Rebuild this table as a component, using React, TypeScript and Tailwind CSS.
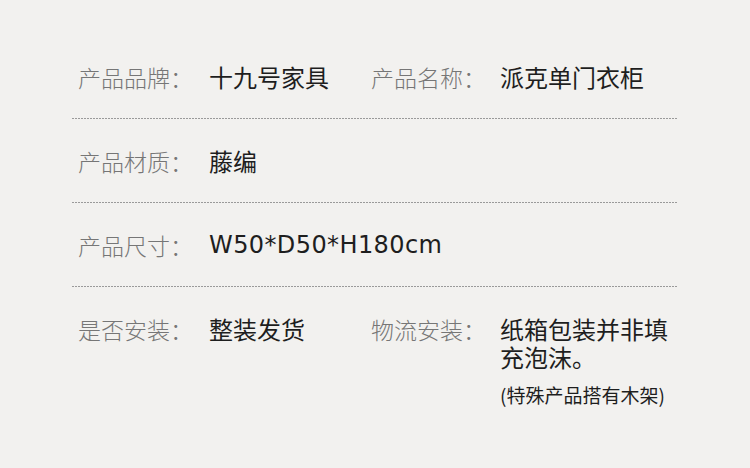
import React from "react";

const font = { fontFamily: '"Noto Sans CJK SC", "Noto Sans", sans-serif' };

function Line() {
  return (
    <div className="h-px w-full bg-[linear-gradient(to_right,#9a9a9a_2px,transparent_2px)] bg-[length:3px_1px] bg-repeat-x" />
  );
}

const label = "text-[23px] leading-[28px] font-light text-[#767676]";
const value = "text-[24px] leading-[28px] text-[#1e1e1e]";

export default function App() {
  return (
    <div className="w-[750px] h-[468px] bg-[#f2f1ef] overflow-hidden" style={font}>
      <div className="ml-[72px] w-[606px] pt-[36px]">
        <div className="flex items-center h-[82px] pl-[6px]">
          <div className={`w-[131px] ${label}`}>产品品牌：</div>
          <div className={`w-[162px] ${value}`}>十九号家具</div>
          <div className={`w-[129px] ${label}`}>产品名称：</div>
          <div className={value}>派克单门衣柜</div>
        </div>
        <Line />
        <div className="flex items-center h-[83px] pl-[6px]">
          <div className={`w-[131px] ${label}`}>产品材质：</div>
          <div className={value}>藤编</div>
        </div>
        <Line />
        <div className="flex items-center h-[83px] pl-[6px]">
          <div className={`w-[131px] ${label}`}>产品尺寸：</div>
          <div className="font-['DejaVu_Sans',sans-serif] text-[24px] leading-[28px] tracking-[0.4px] text-[#1e1e1e]">W50*D50*H180cm</div>
        </div>
        <Line />
        <div className="flex items-start pt-[28px] pl-[6px]">
          <div className={`w-[131px] ${label}`}>是否安装：</div>
          <div className={`w-[162px] ${value}`}>整装发货</div>
          <div className={`w-[129px] ${label}`}>物流安装：</div>
          <div className="w-[176px]">
            <div className={value}>纸箱包装并非填充泡沫。</div>
            <div className="mt-[10px] text-[19px] leading-[28px] text-[#1e1e1e]">(特殊产品搭有木架)</div>
          </div>
        </div>
      </div>
    </div>
  );
}
